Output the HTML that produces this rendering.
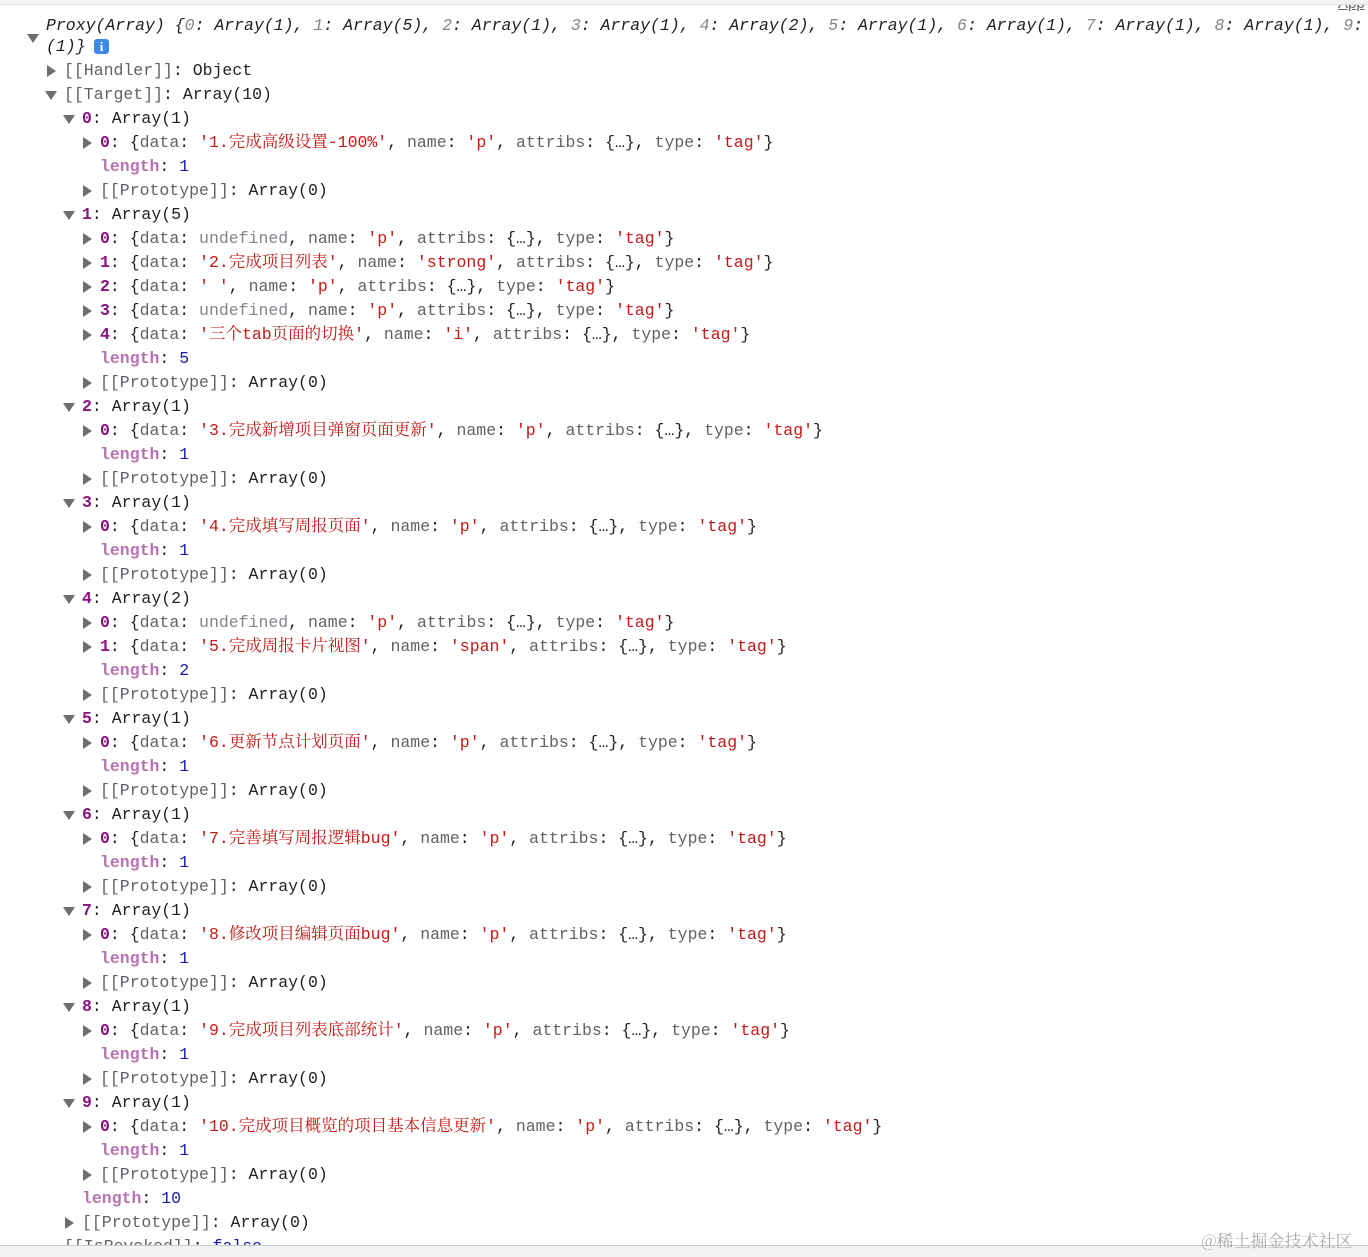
<!DOCTYPE html>
<html><head><meta charset="utf-8">
<style>
html,body{margin:0;padding:0;background:#fff;width:1368px;height:1257px;overflow:hidden;position:relative}
body{font-family:"Liberation Mono","Noto Serif CJK SC",monospace;font-size:16.5px;color:#222}
.r{position:absolute;height:24px;line-height:24px;white-space:nowrap}
.r span{line-height:0}
.t{position:absolute;width:0;height:0}
.tr{border-top:6px solid transparent;border-bottom:6px solid transparent;border-left:9px solid #6e6e6e}
.td{border-left:6px solid transparent;border-right:6px solid transparent;border-top:9px solid #6e6e6e}
.k{color:#881280;font-weight:bold}
.n{color:#b871b3;font-weight:bold}
.s{color:#c41a16}
.s span{font-family:"Noto Serif CJK SC",serif}
.b{color:#1a1aa6}
.g{color:#5f6368}
.u{color:#80868b}
.i{font-style:italic}
</style></head><body>
<div style="position:absolute;left:0;top:0;width:1368px;height:4px;background:#f1f3f4;border-bottom:1px solid #ddd;z-index:2"></div>
<div class="r" style="left:22px;top:-14px;color:#333">newItmIkes.value</div>
<div class="r g" style="left:1338px;top:-8px;text-decoration:underline;font-family:'Liberation Sans',sans-serif;font-size:15px">App</div>
<div class="t td" style="left:27px;top:34px"></div>
<div class="r i" style="left:46px;top:14px">Proxy(Array) {<span class="u">0</span>: Array(1), <span class="u">1</span>: Array(5), <span class="u">2</span>: Array(1), <span class="u">3</span>: Array(1), <span class="u">4</span>: Array(2), <span class="u">5</span>: Array(1), <span class="u">6</span>: Array(1), <span class="u">7</span>: Array(1), <span class="u">8</span>: Array(1), <span class="u">9</span>: Array</div>
<div class="r i" style="left:46px;top:35px">(1)}</div>
<div style="position:absolute;left:94px;top:39px;width:15px;height:15px;background:#3d8ae6;border-radius:3px;color:#fff;font:bold 13px 'Liberation Serif',serif;text-align:center;line-height:15px">i</div>

<div class="t tr" style="left:47px;top:65px"></div>
<div class="r" style="left:64px;top:59px"><span class="g">[[Handler]]</span>: Object</div>
<div class="t td" style="left:45px;top:91px"></div>
<div class="r" style="left:64px;top:83px"><span class="g">[[Target]]</span>: Array(10)</div>

<div class="t td" style="left:63px;top:115px"></div><div class="r" style="left:82px;top:107px"><span class="k">0</span>: Array(1)</div>
<div class="t tr" style="left:83px;top:137px"></div><div class="r" style="left:100px;top:131px"><span class="k">0</span>: {<span class="g">data</span>: <span class="s">'1.<span>完成高级设置</span>-100%'</span>, <span class="g">name</span>: <span class="s">'p'</span>, <span class="g">attribs</span>: {…}, <span class="g">type</span>: <span class="s">'tag'</span>}</div>
<div class="r" style="left:100px;top:155px"><span class="n">length</span>: <span class="b">1</span></div>
<div class="t tr" style="left:83px;top:185px"></div><div class="r" style="left:100px;top:179px"><span class="g">[[Prototype]]</span>: Array(0)</div>

<div class="t td" style="left:63px;top:211px"></div><div class="r" style="left:82px;top:203px"><span class="k">1</span>: Array(5)</div>
<div class="t tr" style="left:83px;top:233px"></div><div class="r" style="left:100px;top:227px"><span class="k">0</span>: {<span class="g">data</span>: <span class="u">undefined</span>, <span class="g">name</span>: <span class="s">'p'</span>, <span class="g">attribs</span>: {…}, <span class="g">type</span>: <span class="s">'tag'</span>}</div>
<div class="t tr" style="left:83px;top:257px"></div><div class="r" style="left:100px;top:251px"><span class="k">1</span>: {<span class="g">data</span>: <span class="s">'2.<span>完成项目列表</span>'</span>, <span class="g">name</span>: <span class="s">'strong'</span>, <span class="g">attribs</span>: {…}, <span class="g">type</span>: <span class="s">'tag'</span>}</div>
<div class="t tr" style="left:83px;top:281px"></div><div class="r" style="left:100px;top:275px"><span class="k">2</span>: {<span class="g">data</span>: <span class="s">' '</span>, <span class="g">name</span>: <span class="s">'p'</span>, <span class="g">attribs</span>: {…}, <span class="g">type</span>: <span class="s">'tag'</span>}</div>
<div class="t tr" style="left:83px;top:305px"></div><div class="r" style="left:100px;top:299px"><span class="k">3</span>: {<span class="g">data</span>: <span class="u">undefined</span>, <span class="g">name</span>: <span class="s">'p'</span>, <span class="g">attribs</span>: {…}, <span class="g">type</span>: <span class="s">'tag'</span>}</div>
<div class="t tr" style="left:83px;top:329px"></div><div class="r" style="left:100px;top:323px"><span class="k">4</span>: {<span class="g">data</span>: <span class="s">'<span>三个</span>tab<span>页面的切换</span>'</span>, <span class="g">name</span>: <span class="s">'i'</span>, <span class="g">attribs</span>: {…}, <span class="g">type</span>: <span class="s">'tag'</span>}</div>
<div class="r" style="left:100px;top:347px"><span class="n">length</span>: <span class="b">5</span></div>
<div class="t tr" style="left:83px;top:377px"></div><div class="r" style="left:100px;top:371px"><span class="g">[[Prototype]]</span>: Array(0)</div>

<div class="t td" style="left:63px;top:403px"></div><div class="r" style="left:82px;top:395px"><span class="k">2</span>: Array(1)</div>
<div class="t tr" style="left:83px;top:425px"></div><div class="r" style="left:100px;top:419px"><span class="k">0</span>: {<span class="g">data</span>: <span class="s">'3.<span>完成新增项目弹窗页面更新</span>'</span>, <span class="g">name</span>: <span class="s">'p'</span>, <span class="g">attribs</span>: {…}, <span class="g">type</span>: <span class="s">'tag'</span>}</div>
<div class="r" style="left:100px;top:443px"><span class="n">length</span>: <span class="b">1</span></div>
<div class="t tr" style="left:83px;top:473px"></div><div class="r" style="left:100px;top:467px"><span class="g">[[Prototype]]</span>: Array(0)</div>

<div class="t td" style="left:63px;top:499px"></div><div class="r" style="left:82px;top:491px"><span class="k">3</span>: Array(1)</div>
<div class="t tr" style="left:83px;top:521px"></div><div class="r" style="left:100px;top:515px"><span class="k">0</span>: {<span class="g">data</span>: <span class="s">'4.<span>完成填写周报页面</span>'</span>, <span class="g">name</span>: <span class="s">'p'</span>, <span class="g">attribs</span>: {…}, <span class="g">type</span>: <span class="s">'tag'</span>}</div>
<div class="r" style="left:100px;top:539px"><span class="n">length</span>: <span class="b">1</span></div>
<div class="t tr" style="left:83px;top:569px"></div><div class="r" style="left:100px;top:563px"><span class="g">[[Prototype]]</span>: Array(0)</div>

<div class="t td" style="left:63px;top:595px"></div><div class="r" style="left:82px;top:587px"><span class="k">4</span>: Array(2)</div>
<div class="t tr" style="left:83px;top:617px"></div><div class="r" style="left:100px;top:611px"><span class="k">0</span>: {<span class="g">data</span>: <span class="u">undefined</span>, <span class="g">name</span>: <span class="s">'p'</span>, <span class="g">attribs</span>: {…}, <span class="g">type</span>: <span class="s">'tag'</span>}</div>
<div class="t tr" style="left:83px;top:641px"></div><div class="r" style="left:100px;top:635px"><span class="k">1</span>: {<span class="g">data</span>: <span class="s">'5.<span>完成周报卡片视图</span>'</span>, <span class="g">name</span>: <span class="s">'span'</span>, <span class="g">attribs</span>: {…}, <span class="g">type</span>: <span class="s">'tag'</span>}</div>
<div class="r" style="left:100px;top:659px"><span class="n">length</span>: <span class="b">2</span></div>
<div class="t tr" style="left:83px;top:689px"></div><div class="r" style="left:100px;top:683px"><span class="g">[[Prototype]]</span>: Array(0)</div>

<div class="t td" style="left:63px;top:715px"></div><div class="r" style="left:82px;top:707px"><span class="k">5</span>: Array(1)</div>
<div class="t tr" style="left:83px;top:737px"></div><div class="r" style="left:100px;top:731px"><span class="k">0</span>: {<span class="g">data</span>: <span class="s">'6.<span>更新节点计划页面</span>'</span>, <span class="g">name</span>: <span class="s">'p'</span>, <span class="g">attribs</span>: {…}, <span class="g">type</span>: <span class="s">'tag'</span>}</div>
<div class="r" style="left:100px;top:755px"><span class="n">length</span>: <span class="b">1</span></div>
<div class="t tr" style="left:83px;top:785px"></div><div class="r" style="left:100px;top:779px"><span class="g">[[Prototype]]</span>: Array(0)</div>

<div class="t td" style="left:63px;top:811px"></div><div class="r" style="left:82px;top:803px"><span class="k">6</span>: Array(1)</div>
<div class="t tr" style="left:83px;top:833px"></div><div class="r" style="left:100px;top:827px"><span class="k">0</span>: {<span class="g">data</span>: <span class="s">'7.<span>完善填写周报逻辑</span>bug'</span>, <span class="g">name</span>: <span class="s">'p'</span>, <span class="g">attribs</span>: {…}, <span class="g">type</span>: <span class="s">'tag'</span>}</div>
<div class="r" style="left:100px;top:851px"><span class="n">length</span>: <span class="b">1</span></div>
<div class="t tr" style="left:83px;top:881px"></div><div class="r" style="left:100px;top:875px"><span class="g">[[Prototype]]</span>: Array(0)</div>

<div class="t td" style="left:63px;top:907px"></div><div class="r" style="left:82px;top:899px"><span class="k">7</span>: Array(1)</div>
<div class="t tr" style="left:83px;top:929px"></div><div class="r" style="left:100px;top:923px"><span class="k">0</span>: {<span class="g">data</span>: <span class="s">'8.<span>修改项目编辑页面</span>bug'</span>, <span class="g">name</span>: <span class="s">'p'</span>, <span class="g">attribs</span>: {…}, <span class="g">type</span>: <span class="s">'tag'</span>}</div>
<div class="r" style="left:100px;top:947px"><span class="n">length</span>: <span class="b">1</span></div>
<div class="t tr" style="left:83px;top:977px"></div><div class="r" style="left:100px;top:971px"><span class="g">[[Prototype]]</span>: Array(0)</div>

<div class="t td" style="left:63px;top:1003px"></div><div class="r" style="left:82px;top:995px"><span class="k">8</span>: Array(1)</div>
<div class="t tr" style="left:83px;top:1025px"></div><div class="r" style="left:100px;top:1019px"><span class="k">0</span>: {<span class="g">data</span>: <span class="s">'9.<span>完成项目列表底部统计</span>'</span>, <span class="g">name</span>: <span class="s">'p'</span>, <span class="g">attribs</span>: {…}, <span class="g">type</span>: <span class="s">'tag'</span>}</div>
<div class="r" style="left:100px;top:1043px"><span class="n">length</span>: <span class="b">1</span></div>
<div class="t tr" style="left:83px;top:1073px"></div><div class="r" style="left:100px;top:1067px"><span class="g">[[Prototype]]</span>: Array(0)</div>

<div class="t td" style="left:63px;top:1099px"></div><div class="r" style="left:82px;top:1091px"><span class="k">9</span>: Array(1)</div>
<div class="t tr" style="left:83px;top:1121px"></div><div class="r" style="left:100px;top:1115px"><span class="k">0</span>: {<span class="g">data</span>: <span class="s">'10.<span>完成项目概览的项目基本信息更新</span>'</span>, <span class="g">name</span>: <span class="s">'p'</span>, <span class="g">attribs</span>: {…}, <span class="g">type</span>: <span class="s">'tag'</span>}</div>
<div class="r" style="left:100px;top:1139px"><span class="n">length</span>: <span class="b">1</span></div>
<div class="t tr" style="left:83px;top:1169px"></div><div class="r" style="left:100px;top:1163px"><span class="g">[[Prototype]]</span>: Array(0)</div>

<div class="r" style="left:82px;top:1187px"><span class="n">length</span>: <span class="b">10</span></div>
<div class="t tr" style="left:65px;top:1217px"></div><div class="r" style="left:82px;top:1211px"><span class="g">[[Prototype]]</span>: Array(0)</div>
<div class="r" style="left:64px;top:1235px"><span class="g">[[IsRevoked]]</span>: <span class="b">false</span></div>

<div style="position:absolute;left:0;top:1245px;width:1368px;height:12px;background:#f1f3f4;border-top:1px solid #ccc"></div>
<div class="r" style="left:1201px;top:1228px;color:#aaa;font-size:17px;font-family:'Noto Serif CJK SC',serif">@稀土掘金技术社区</div>
</body></html>
